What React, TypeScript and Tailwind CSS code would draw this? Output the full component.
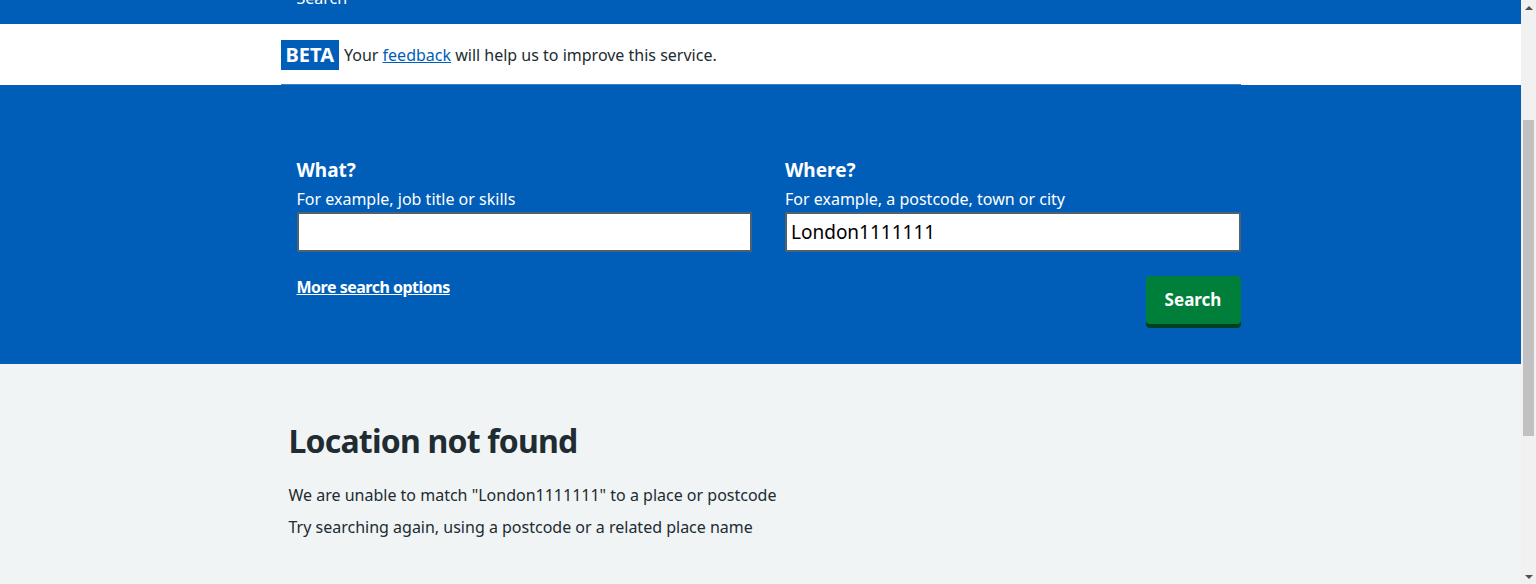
const font = { fontFamily: '"Noto Sans", Arial, sans-serif' };

const Scrollbar = () => (
  <div className="w-[15px] shrink-0 bg-[#f1f1f1] flex flex-col items-center">
    <div className="h-[15px] w-full flex items-center justify-center">
      <div className="w-0 h-0 border-l-[4px] border-r-[4px] border-b-[4px] border-l-transparent border-r-transparent border-b-[#505050]" />
    </div>
    <div className="h-[105px]" />
    <div className="w-[11px] h-[316px] bg-[#c1c1c1]" />
    <div className="flex-1" />
    <div className="h-[15px] w-full flex items-center justify-center">
      <div className="w-0 h-0 border-l-[4px] border-r-[4px] border-t-[4px] border-l-transparent border-r-transparent border-t-[#505050]" />
    </div>
  </div>
);

export default function App() {
  return (
    <div className="flex h-[584px] overflow-hidden text-[#212b32]" style={font}>
      <div className="flex-1 flex flex-col bg-[#f0f4f5]">
        {/* header tail, scrolled past */}
        <div className="h-[24px] bg-[#005eb8] overflow-hidden">
          <div className="w-[960px] mx-auto pl-4 -mt-[14px] text-white text-base leading-6">Search</div>
        </div>

        {/* beta banner */}
        <div className="bg-white">
          <div className="w-[960px] mx-auto h-[61px] flex items-center gap-[5px] border-b border-[#3d82c9]">
            <span className="bg-[#005eb8] text-white font-bold text-[20px] leading-[30px] px-[5px] h-[30px] mt-[2px]">BETA</span>
            <p className="text-base mt-[2px]">
              Your <a href="#" className="text-[#005eb8] underline">feedback</a> will help us to improve this service.
            </p>
          </div>
        </div>

        {/* search form */}
        <div className="bg-[#005eb8] h-[279px]">
          <div className="w-[960px] mx-auto pl-4 pt-[71px]">
            <div className="grid grid-cols-2 gap-x-[33px]">
              <div>
                <label className="block text-white font-bold text-[19px] leading-7">What?</label>
                <p className="text-white text-base leading-6 mt-[3px]">For example, job title or skills</p>
                <input className="block w-full h-[40px] mt-[1px] bg-white border-2 border-[#4c6272] px-[4px] text-[19px] text-black outline-none" />
              </div>
              <div>
                <label className="block text-white font-bold text-[19px] leading-7">Where?</label>
                <p className="text-white text-base leading-6 mt-[3px]">For example, a postcode, town or city</p>
                <input
                  className="block w-full h-[40px] mt-[1px] bg-white border-2 border-[#4c6272] px-[4px] text-[19px] text-black outline-none"
                  defaultValue="London1111111"
                />
              </div>
            </div>
            <div className="flex justify-between items-start mt-[23px]">
              <a href="#" className="text-white font-bold underline text-base tracking-[-0.5px] leading-6">More search options</a>
              <button className="bg-[#007f3b] text-white font-bold text-[17px] rounded-[4px] w-[95px] h-[48px] shadow-[0_4px_0_#00401e] mt-[1px]">
                Search
              </button>
            </div>
          </div>
        </div>

        {/* result message */}
        <div className="flex-1">
          <div className="w-[960px] mx-auto px-2 pt-[57px]">
            <h1 className="text-[32px] font-bold tracking-[-0.8px] leading-10">Location not found</h1>
            <p className="text-base leading-6 mt-[22px]">We are unable to match "London1111111" to a place or postcode</p>
            <p className="text-base leading-6 mt-[8px]">Try searching again, using a postcode or a related place name</p>
          </div>
        </div>
      </div>
      <Scrollbar />
    </div>
  );
}
